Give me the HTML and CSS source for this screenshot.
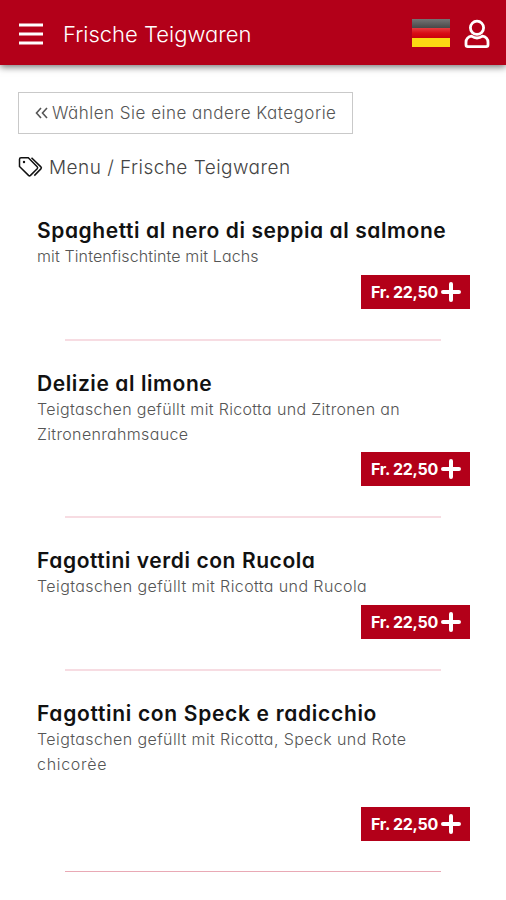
FILE: index.html
```html
<!DOCTYPE html>
<html lang="de">
<head>
<meta charset="utf-8">
<title>Frische Teigwaren</title>
<link rel="stylesheet" href="styles.css">
</head>
<body>
<header class="topbar">
  <svg class="burger" viewBox="0 0 26 22" aria-hidden="true"><path d="M1 2h24M1 11h24M1 20h24"/></svg>
  <h1 class="topbar-title">Frische Teigwaren</h1>
  <svg class="flag" viewBox="0 0 38 28" aria-hidden="true">
    <defs>
      <linearGradient id="black" x2="0" y2="1"><stop stop-color="#747474"/><stop offset="1" stop-color="#484848"/></linearGradient>
      <linearGradient id="red" x2="0" y2="1"><stop stop-color="#e43c40"/><stop offset=".5" stop-color="#d90d16"/><stop offset="1" stop-color="#c9000c"/></linearGradient>
    </defs>
    <path fill="url(#black)" d="M0 0h38v9H0z"/><path fill="url(#red)" d="M0 9h38v10H0z"/><path fill="#fbd913" d="M0 19h38v9H0z"/>
  </svg>
  <svg class="user" viewBox="0 0 26 30" aria-hidden="true"><circle cx="13" cy="8.800" r="6.600"/><path d="M7.500 17.200q5.500 3.600 11 0a5.800 5.800 0 0 1 5.500 6v2.600a1.800 1.800 0 0 1-1.800 1.800H3.800a1.800 1.800 0 0 1-1.800-1.800v-2.600a5.800 5.800 0 0 1 5.500-6z"/></svg>
</header>
<main>
  <a class="back"><svg viewBox="0 0 13 12" aria-hidden="true"><path d="M6 1 1.500 6 6 11M12 1 7.500 6l4.500 5"/></svg><span>Wählen Sie eine andere Kategorie</span></a>
  <nav class="crumbs"><svg viewBox="0 0 26 22" aria-hidden="true"><path d="M1.500 3.200v7.300l9 8.900q1 .9 2 0l6.700-6.700q.9-1 0-2l-8.900-8.900H3q-1.500 0-1.500 1.400zM13.500 1.800l9.400 9.100q1 1 0 2l-6.600 6.700"/><circle cx="6" cy="6" r="1.200"/></svg><span>Menu / Frische Teigwaren</span></nav>
  <section class="menu">
    <article class="dish"><h2>Spaghetti al nero di seppia al salmone</h2><p>mit Tintenfischtinte mit Lachs</p><button class="price"><span>Fr. 22,50</span><svg viewBox="0 0 20 20" aria-hidden="true"><path d="M10 2v16M2 10h16"/></svg></button></article>
    <article class="dish"><h2>Delizie al limone</h2><p>Teigtaschen gefüllt mit Ricotta und Zitronen an<br>Zitronenrahmsauce</p><button class="price"><span>Fr. 22,50</span><svg viewBox="0 0 20 20" aria-hidden="true"><path d="M10 2v16M2 10h16"/></svg></button></article>
    <article class="dish"><h2>Fagottini verdi con Rucola</h2><p>Teigtaschen gefüllt mit Ricotta und Rucola</p><button class="price"><span>Fr. 22,50</span><svg viewBox="0 0 20 20" aria-hidden="true"><path d="M10 2v16M2 10h16"/></svg></button></article>
    <article class="dish"><h2>Fagottini con Speck e radicchio</h2><p>Teigtaschen gefüllt mit Ricotta, Speck und Rote<br><span class="last-word">chicorèe</span></p><button class="price"><span>Fr. 22,50</span><svg viewBox="0 0 20 20" aria-hidden="true"><path d="M10 2v16M2 10h16"/></svg></button></article>
  </section>
</main>
</body>
</html>
```
FILE: styles.css
```css
* { box-sizing: border-box; }
body {
  margin: 0;
  height: 900px;
  overflow: hidden;
  background: #fff;
  color: #111;
  font-family: Inter, "Liberation Sans", sans-serif;
  font-feature-settings: "cv11";
}
h1, h2, p { margin: 0; }
svg { display: block; flex: none; fill: none; stroke: currentColor; }
.topbar {
  display: flex;
  align-items: center;
  height: 65px;
  padding: 2px 16px 0 18px;
  background: #b30019;
  color: #fff;
  box-shadow: 0 2px 7px rgba(0, 0, 0, .55);
}
.burger { width: 26px; height: 22px; stroke-width: 3; }
.topbar-title { margin: 0 auto 0 19px; font-size: 22px; font-weight: 300; white-space: nowrap; }
.flag { width: 38px; height: 28px; margin: 0 14px 2px 0; stroke: none; }
.user { width: 26px; height: 30px; stroke-width: 2.8; }
.back {
  display: flex;
  align-items: center;
  gap: 4px;
  width: 335px;
  height: 42px;
  margin: 27px 0 0 18px;
  padding-left: 16px;
  border: 1px solid #c9c9c9;
  color: #555;
  font-size: 17px;
  font-weight: 300;
  letter-spacing: .49px;
  white-space: nowrap;
}
.back svg { width: 13px; height: 12px; stroke-width: 1.6; }
.crumbs {
  display: flex;
  align-items: center;
  gap: 5px;
  height: 30px;
  margin: 18px 0 0 18px;
  color: #444;
  font-size: 19px;
  font-weight: 300;
  letter-spacing: .46px;
}
.crumbs svg { width: 26px; height: 22px; stroke: #111; stroke-width: 1.5; }
.crumbs circle { fill: #111; stroke: none; }
.menu { padding-top: 6px; }
.dish {
  display: flex;
  flex-direction: column;
  height: 153px;
  padding: 29px 36px 0 37px;
}
.dish::after {
  content: "";
  flex: none;
  width: 376px;
  height: 2px;
  margin-left: 28px;
  background: #f7dce2;
}
.dish:nth-child(2) { height: 177px; }
.dish:nth-child(4) { height: 201px; }
.dish:nth-child(4)::after { height: 1px; background: #e9a9b5; }
.dish h2 { font-size: 21px; line-height: 27px; font-weight: 600; letter-spacing: .58px; white-space: nowrap; }
.dish p { color: #555; font-size: 16px; line-height: 24.5px; font-weight: 300; letter-spacing: .4px; white-space: nowrap; }
.dish:nth-child(1) p { letter-spacing: .12px; }
.dish:nth-child(2) p { letter-spacing: .34px; }
.dish:nth-child(4) h2 { letter-spacing: .69px; }
.dish .last-word { letter-spacing: .7px; }
.price {
  display: flex;
  align-items: center;
  align-self: flex-end;
  flex: none;
  gap: 3px;
  width: 109px;
  height: 34px;
  margin: auto 0 30px;
  padding: 0 0 0 10px;
  border: 0;
  background: #b30019;
  color: #fff;
  font: 700 16px Inter, sans-serif;
  letter-spacing: -.3px;
}
.price svg { width: 20px; height: 20px; stroke-width: 4; stroke-linecap: round; }
```
